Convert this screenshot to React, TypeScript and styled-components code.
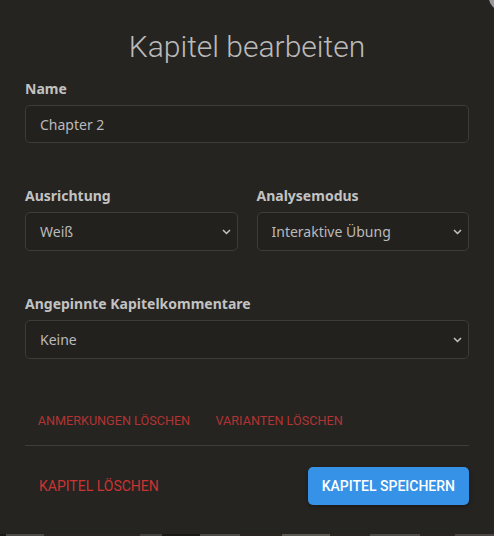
import * as React from 'react';
import styled, { createGlobalStyle } from 'styled-components';

const GlobalStyle = createGlobalStyle`
    html, body {
        margin: 0;
        padding: 0;
        background: #161512;
        overflow: hidden;
    }

    body {
        font-family: "Noto Sans", "Liberation Sans", sans-serif;
        color: #bababa;
    }
`;

interface Field {
    id: string,
    label: string,
    value: string,
    options?: string[],
}

const orientation: Field = { id: 'orientation', label: 'Ausrichtung', value: 'Weiß', options: ['Weiß', 'Schwarz'] };
const mode: Field = { id: 'mode', label: 'Analysemodus', value: 'Interaktive Übung', options: ['Normale Analyse', 'Interaktive Übung', 'Übungsaufgabe'] };
const pinned: Field = { id: 'pinned', label: 'Angepinnte Kapitelkommentare', value: 'Keine', options: ['Keine', 'Rechts', 'Unten'] };

const Chevron: React.FC = () => (
    <ChevronIcon width="9" height="6" viewBox="0 0 9 6">
        <polyline points="1,1 4.5,4.5 8,1" fill="none" stroke="#c4c4c4" strokeWidth="1.5" />
    </ChevronIcon>
);

const SelectField: React.FC<{ field: Field }> = ({ field }) => (
    <Group>
        <Label htmlFor={field.id}>{field.label}</Label>
        <SelectWrap>
            <Select id={field.id} defaultValue={field.value}>
                {field.options?.map(option => (
                    <option key={option} value={option}>{option}</option>
                ))}
            </Select>
            <Chevron />
        </SelectWrap>
    </Group>
);

const App: React.FC = () => {
    return (
        <>
            <GlobalStyle />
            <Dialog>
                {/* close button sits mostly outside the viewport */}
                <CloseButton aria-label="Schließen">
                    <svg width="24" height="24" viewBox="0 0 24 24">
                        <circle cx="12" cy="12" r="12" fill="#9a9a9a" />
                        <path d="M8 8 L16 16 M16 8 L8 16" stroke="#262421" strokeWidth="2" />
                    </svg>
                </CloseButton>
                <Title>Kapitel bearbeiten</Title>

                <Form>
                    <Group>
                        <Label htmlFor="name">Name</Label>
                        <TextInput id="name" defaultValue="Chapter 2" />
                    </Group>

                    <Columns>
                        <SelectField field={orientation} />
                        <SelectField field={mode} />
                    </Columns>

                    <SelectField field={pinned} />
                </Form>

                <ClearRow>
                    <DangerButton $small>Anmerkungen löschen</DangerButton>
                    <DangerButton $small>Varianten löschen</DangerButton>
                </ClearRow>

                <Divider />

                <Footer>
                    <DangerButton>Kapitel löschen</DangerButton>
                    <PrimaryButton>Kapitel speichern</PrimaryButton>
                </Footer>
            </Dialog>
            <BoardPeek />
        </>
    );
};

const Dialog = styled.div`
    position: relative;
    box-sizing: border-box;
    width: 494px;
    height: 534px;
    padding: 30px 25px 29px;
    background: #262421;
    display: flex;
    flex-direction: column;
`;

const CloseButton = styled.span`
    position: absolute;
    top: -14px;
    right: -19px;
    width: 24px;
    height: 24px;
    line-height: 0;
`;

const Title = styled.h2`
    margin: 0;
    font-family: Roboto, "Liberation Sans", sans-serif;
    font-weight: 300;
    font-size: 30px;
    line-height: 34px;
    text-align: center;
    color: #bababa;
`;

const Form = styled.div`
    margin-top: 15px;
    display: flex;
    flex-direction: column;
    gap: 43px;
`;

const Columns = styled.div`
    display: grid;
    grid-template-columns: 1fr 1fr;
    gap: 19px;
`;

const Group = styled.div`
    display: flex;
    flex-direction: column;
`;

const Label = styled.label`
    font-size: 14px;
    font-weight: 700;
    line-height: 19px;
    margin-bottom: 7px;
    color: #c2c2c2;
`;

const controlStyles = `
    box-sizing: border-box;
    width: 100%;
    margin: 0;
    padding: 0 15px 0 14px;
    border: 1px solid #3e3c39;
    border-radius: 5px;
    background: #23211e;
    color: #bababa;
    font-family: "Noto Sans", "Liberation Sans", sans-serif;
    font-size: 14px;
    outline: none;
`;

const TextInput = styled.input`
    ${controlStyles}
    height: 38px;
`;

const SelectWrap = styled.div`
    position: relative;
`;

const Select = styled.select`
    ${controlStyles}
    height: 39px;
    appearance: none;
    -webkit-appearance: none;
`;

const ChevronIcon = styled.svg`
    position: absolute;
    right: 7px;
    top: 17px;
    pointer-events: none;
`;

const ClearRow = styled.div`
    margin-top: 46px;
    display: flex;
`;

const DangerButton = styled.button<{ $small?: boolean }>`
    border: none;
    background: transparent;
    cursor: pointer;
    font-family: Roboto, "Liberation Sans", sans-serif;
    text-transform: uppercase;
    font-weight: 400;
    font-size: ${p => (p.$small ? '12.65px' : '14px')};
    color: ${p => (p.$small ? '#b03434' : '#cc3333')};
    height: ${p => (p.$small ? '30px' : '38px')};
    padding: ${p => (p.$small ? '0 12.7px' : '0 14px')};
`;

const Divider = styled.hr`
    margin: 10px 0 0;
    border: none;
    border-top: 1px solid #3f3d3a;
`;

const Footer = styled.div`
    margin-top: 21px;
    display: flex;
    justify-content: space-between;
    align-items: center;
`;

const PrimaryButton = styled.button`
    height: 38px;
    padding: 0 14px;
    border: none;
    border-radius: 5px;
    background: #3692e7;
    color: #ffffff;
    font-family: Roboto, "Liberation Sans", sans-serif;
    font-size: 14px;
    font-weight: 500;
    text-transform: uppercase;
    box-shadow: 0 2px 5px rgba(0, 0, 0, 0.3);
    cursor: pointer;
`;

const BoardPeek = styled.div`
    height: 2px;
    background: linear-gradient(
        90deg,
        #1a1916 0 6px, #4a4a48 6px 44px, #2a2520 44px 140px, #45423d 140px 162px,
        #1a1916 162px 200px, #4a4a48 200px 240px, #2a2520 240px 282px, #5a5650 282px 330px,
        #2a2520 330px 370px, #4a4a48 370px 420px, #2a2520 420px 455px, #4a4540 455px 494px
    );
`;

export default App;
